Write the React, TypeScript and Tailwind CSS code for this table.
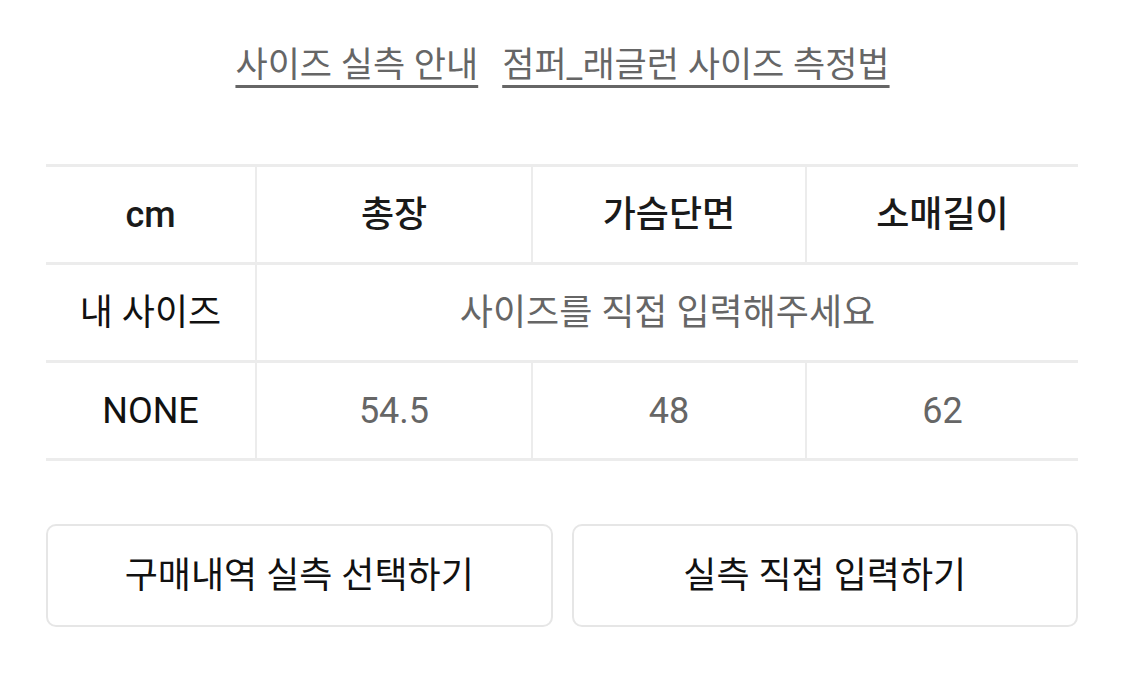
import React from 'react';

const font = { fontFamily: 'Roboto, "Noto Sans CJK KR", sans-serif' };

const headers = ['총장', '가슴단면', '소매길이'];
const values = ['54.5', '48', '62'];

const Cell = ({ children, className = '' }: { children: React.ReactNode; className?: string }) => (
  <div className={`flex items-center justify-center h-[95px] ${className}`}>{children}</div>
);

export default function App() {
  return (
    <div className="w-[1125px] h-[674px] bg-white" style={font}>
      <div className="flex justify-center gap-[24px] pt-[40px] text-[35px] leading-[52px] text-[#666]">
        <span className="underline decoration-[3px] underline-offset-[8px] decoration-[#666]">사이즈 실측 안내</span>
        <span className="underline decoration-[3px] underline-offset-[8px] decoration-[#666]">점퍼_래글런 사이즈 측정법</span>
      </div>

      <div className="ml-[46px] mt-[72px] w-[1032px] border-t-[3px] border-[#ececec]">
        <div className="grid grid-cols-[209px_276px_274px_1fr] border-b-[3px] border-[#ececec] text-[36px] font-medium text-[#1a1a1a]">
          <Cell>cm</Cell>
          {headers.map((h) => (
            <Cell key={h} className="border-l-[2px] border-[#ececec]">{h}</Cell>
          ))}
        </div>
        <div className="grid grid-cols-[209px_1fr] border-b-[3px] border-[#ececec] text-[36px]">
          <Cell className="text-[#111]">내 사이즈</Cell>
          <Cell className="border-l-[2px] border-[#ececec] text-[#666]">사이즈를 직접 입력해주세요</Cell>
        </div>
        <div className="grid grid-cols-[209px_276px_274px_1fr] border-b-[3px] border-[#ececec] text-[36px]">
          <Cell className="text-[#111]">NONE</Cell>
          {values.map((v) => (
            <Cell key={v} className="border-l-[2px] border-[#ececec] text-[#666]">{v}</Cell>
          ))}
        </div>
      </div>

      <div className="ml-[46px] mt-[63px] w-[1032px] flex gap-[19px]">
        <button className="flex-1 h-[103px] rounded-[10px] border-[2px] border-[#e6e6e6] bg-white text-[36px] text-[#111]">
          구매내역 실측 선택하기
        </button>
        <button className="flex-1 h-[103px] rounded-[10px] border-[2px] border-[#e6e6e6] bg-white text-[36px] text-[#111]">
          실측 직접 입력하기
        </button>
      </div>
    </div>
  );
}
